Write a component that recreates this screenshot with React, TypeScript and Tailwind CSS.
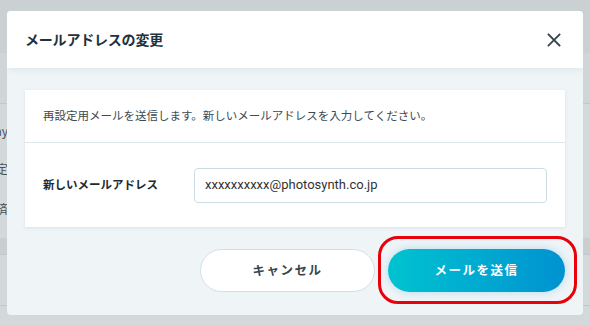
import React from "react";

const jp = { fontFamily: '"Noto Sans CJK JP", "Noto Sans", sans-serif' } as React.CSSProperties;

function BgRow({ cls, children }: { cls: string; children?: React.ReactNode }) {
  return <div className={cls}>{children}</div>;
}

function EdgeText({ text, cls }: { text: string; cls: string }) {
  return (
    <div className={`w-[8px] flex justify-end overflow-hidden whitespace-nowrap ${cls}`}>
      <span>{text}</span>
    </div>
  );
}

export default function App() {
  return (
    <div className="relative w-[590px] h-[326px] overflow-hidden bg-[#d2d7da]" style={jp}>
      {/* faded page behind the overlay */}
      <div className="flex flex-col w-full h-full">
        <BgRow cls="h-[53px] bg-[#cbd0d3]" />
        <BgRow cls="h-[51px] bg-[#d0d5d8] border-b border-[#bfc8cd]" />
        <div className="h-[134px] bg-[#d3d8db] flex flex-col text-[12px] text-[#4a5257]">
          <EdgeText text="Gateway" cls="h-[20px] mt-[17px] items-center" />
          <EdgeText text="設定" cls="h-[20px] mt-[18px] items-center" />
          <EdgeText text="済" cls="h-[20px] mt-[20px] items-center" />
        </div>
        <BgRow cls="h-[17px] bg-[#c9ced1] border-b border-[#bfc8cd]" />
        <BgRow cls="h-[51px] bg-[#d3d8db] border-b border-[#bfc8cd]" />
        <BgRow cls="flex-1 bg-[#d3d8db]" />
      </div>

      {/* modal */}
      <div className="absolute left-[7px] top-[11px] w-[576px] h-[304px] rounded-[4px] overflow-hidden bg-[#eff4f7] flex flex-col">
        <div className="h-[57px] bg-white flex items-center justify-between pl-[18px] pr-[22px] shadow-[0_2px_6px_rgba(120,140,150,0.12)] relative z-10">
          <h2 className="text-[14px] font-bold text-[#1e323c] tracking-[-0.2px]">メールアドレスの変更</h2>
          <svg width="14" height="14" viewBox="0 0 14 14" className="text-[#37474f]">
            <path d="M1.5 1.5 L12.5 12.5 M12.5 1.5 L1.5 12.5" stroke="currentColor" strokeWidth="1.8" strokeLinecap="square" />
          </svg>
        </div>

        <div className="flex-1 flex flex-col px-[18px] pt-[22px]">
          <div className="bg-white shadow-[0_1px_3px_rgba(100,120,130,0.15)] flex flex-col">
            <div className="h-[53px] flex items-center pl-[18px] border-b border-[#dde6ea] text-[11.5px] text-[#3d4a52]">
              再設定用メールを送信します。新しいメールアドレスを入力してください。
            </div>
            <div className="h-[84px] flex items-center pl-[18px] pr-[18px]">
              <div className="w-[151px] text-[11.5px] font-bold text-[#1e2a30]">新しいメールアドレス</div>
              <div
                className="flex-1 h-[35px] rounded-[4px] border border-[#cadde5] flex items-center pl-[10px] text-[13px] text-[#333]"
                style={{ fontFamily: 'Roboto, "Noto Sans", sans-serif' }}
              >
                xxxxxxxxxx@photosynth.co.jp
              </div>
            </div>
          </div>

          <div className="flex justify-end items-center gap-[13px] mt-[22px]">
            <button className="w-[175px] h-[43px] rounded-full bg-white border border-[#cde0e8] text-[12.5px] font-bold text-[#37474f] tracking-[1.5px]">
              キャンセル
            </button>
            <div className="relative">
              <div className="absolute -left-[10px] -top-[13px] w-[199px] h-[68px] rounded-[20px] border-[3px] border-[#e8000b]" />
              <button className="w-[177px] h-[43px] rounded-full bg-gradient-to-r from-[#00c3cf] to-[#0092d1] text-white text-[12.5px] font-bold tracking-[1.5px] shadow-[0_0_8px_rgba(0,150,210,0.25)]">
                メールを送信
              </button>
            </div>
          </div>
        </div>
      </div>
    </div>
  );
}
